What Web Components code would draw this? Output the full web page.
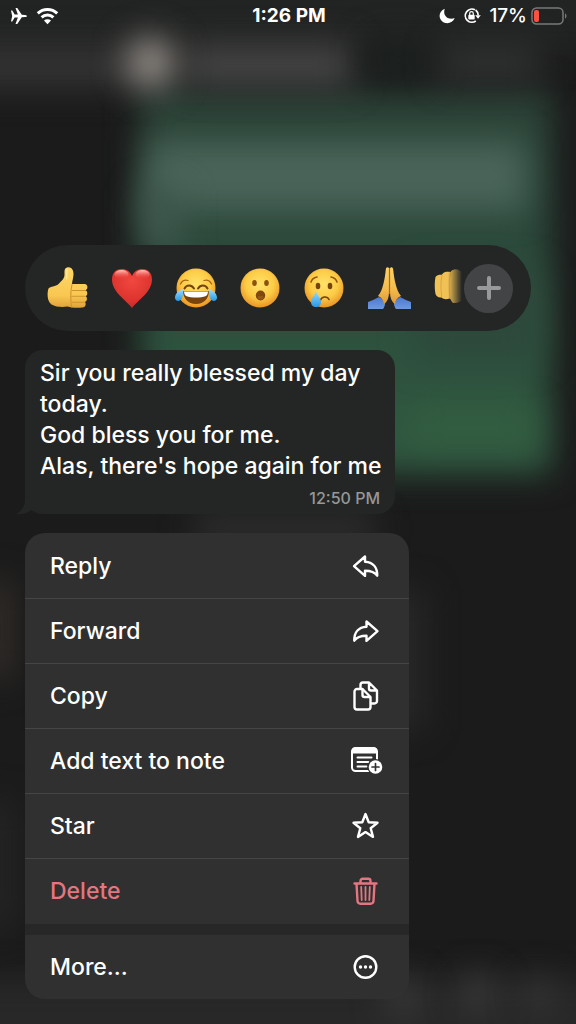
<!DOCTYPE html>
<html lang="en">
<head>
    <meta charset="utf-8">
    <meta name="viewport" content="width=device-width, initial-scale=1">
    <title>Message actions</title>
    <style>
        body {
            margin: 0;
            background: #1a1a1a;
            color: #ffffff;
            font-family: Inter, "Liberation Sans", sans-serif;
            font-weight: 500;
        }
    </style>
</head>
<body>
    <message-screen>
        <chat-backdrop slot="backdrop"></chat-backdrop>
        <status-bar slot="status" time="1:26 PM" battery="17%"></status-bar>
        <reaction-bar></reaction-bar>
        <message-bubble time="12:50 PM">Sir you really blessed my day today.<br>God bless you for me.<br>Alas, there's hope again for me</message-bubble>
        <action-menu>
            <action-item icon="reply">Reply</action-item>
            <action-item icon="forward">Forward</action-item>
            <action-item icon="copy">Copy</action-item>
            <action-item icon="note">Add text to note</action-item>
            <action-item icon="star">Star</action-item>
            <action-item icon="trash" danger>Delete</action-item>
            <action-item icon="more" separate>More...</action-item>
        </action-menu>
    </message-screen>

    <script>
        class BaseElement extends HTMLElement {
            render(html) {
                const template = document.createElement("template");
                template.innerHTML = html;
                const shadow = this.attachShadow({ mode: "open" });
                shadow.appendChild(template.content.cloneNode(true));
                return shadow;
            }
        }

        class MessageScreen extends BaseElement {
            constructor() {
                super();
                this.render(`
                    <style>
                        :host {
                            display: flex;
                            flex-direction: column;
                            position: relative;
                            min-height: 100vh;
                            overflow: hidden;
                        }

                        main {
                            display: flex;
                            flex-direction: column;
                            align-items: flex-start;
                            gap: 19px;
                            position: relative;
                            padding: 213px 45px 25px 25px;
                        }
                    </style>
                    <slot name="backdrop"></slot>
                    <slot name="status"></slot>
                    <main><slot></slot></main>
                `);
            }
        }

        // The blurred chat that lies behind the open menu
        class ChatBackdrop extends BaseElement {
            constructor() {
                super();
                this.render(`
                    <style>
                        :host {
                            display: block;
                            position: absolute;
                            inset: 0;
                            overflow: hidden;
                        }

                        svg {
                            display: block;
                            width: 100%;
                            height: 100%;
                        }
                    </style>
                    <svg viewBox="0 0 576 1024" preserveAspectRatio="none" aria-hidden="true">
                        <defs>
                            <linearGradient id="green" x1="0" y1="0" x2="0" y2="1">
                                <stop offset="0" stop-color="#2c4237"/>
                                <stop offset="0.4" stop-color="#2c4a3c"/>
                                <stop offset="0.62" stop-color="#2e513e"/>
                                <stop offset="1" stop-color="#305841"/>
                            </linearGradient>
                            <filter id="soft" x="-100%" y="-100%" width="300%" height="300%" color-interpolation-filters="sRGB">
                                <feGaussianBlur stdDeviation="16"/>
                            </filter>
                        </defs>
                        <rect width="576" height="1024" fill="#1b1b1b"/>
                        <rect x="-40" y="-40" width="660" height="92" fill="#222423" filter="url(#soft)"/>
                        <rect x="-40" y="44" width="180" height="44" fill="#333333" filter="url(#soft)"/>
                        <rect x="140" y="90" width="412" height="384" fill="url(#green)" filter="url(#soft)"/>
                        <rect x="146" y="142" width="380" height="68" fill="#4a6459" filter="url(#soft)"/>
                        <rect x="140" y="190" width="40" height="60" fill="#40584e" filter="url(#soft)"/>
                        <rect x="415" y="270" width="125" height="90" fill="#2d493c" filter="url(#soft)"/>
                        <rect x="410" y="410" width="126" height="34" fill="#335f40" filter="url(#soft)"/>
                        <rect x="185" y="44" width="168" height="42" fill="#454545" filter="url(#soft)"/>
                        <rect x="368" y="40" width="62" height="40" fill="#1c211f" filter="url(#soft)"/>
                        <rect x="440" y="44" width="100" height="36" fill="#303131" filter="url(#soft)"/>
                        <ellipse cx="151" cy="63" rx="26" ry="27" fill="#8e8984" filter="url(#soft)"/>
                        <rect x="195" y="516" width="180" height="24" fill="#333333" filter="url(#soft)"/>
                        <rect x="-20" y="580" width="34" height="100" fill="#312c29" filter="url(#soft)"/>
                        <rect x="60" y="590" width="364" height="140" fill="#282828" filter="url(#soft)"/>
                        <rect x="-20" y="800" width="34" height="130" fill="#252525" filter="url(#soft)"/>
                        <rect x="-40" y="978" width="660" height="100" fill="#282828" filter="url(#soft)"/>
                        <circle cx="404" cy="998" r="20" fill="#383838" filter="url(#soft)"/>
                        <circle cx="478" cy="994" r="20" fill="#383838" filter="url(#soft)"/>
                        <circle cx="538" cy="996" r="18" fill="#343434" filter="url(#soft)"/>
                    </svg>
                `);
            }
        }

        class StatusBar extends BaseElement {
            constructor() {
                super();
                const shadow = this.render(`
                    <style>
                        :host {
                            display: grid;
                            grid-template-columns: 1fr auto 1fr;
                            align-items: center;
                            position: relative;
                            height: 32px;
                            padding: 0 8px 0 10px;
                            font-size: 19px;
                            line-height: 24px;
                        }

                        .side {
                            display: flex;
                            align-items: center;
                            gap: 8px;
                        }

                        .right {
                            justify-content: flex-end;
                        }

                        .power {
                            display: flex;
                            align-items: center;
                            gap: 4px;
                        }

                        .time {
                            font-weight: 700;
                        }

                        svg {
                            display: block;
                            fill: #ffffff;
                        }
                    </style>
                    <div class="side">
                        <svg width="18" height="18" viewBox="0 0 16 18" aria-hidden="true">
                            <path d="M0 3.500h1.300L3.700 7.400l3.200.2L4.500 1h1.800l4.500 6.700 3.200.2C15.400 8 16 8.500 16 9s-.6 1-2 1.100l-3.200.2L6.300 17H4.500l2.400-6.600-3.200.2-2.400 3.900H0L1.200 9z"/>
                        </svg>
                        <svg width="23" height="18" viewBox="0 0 22 18" aria-hidden="true">
                            <g fill="none" stroke="#ffffff" stroke-width="3">
                                <path d="M1.300 6.300a14 14 0 0 1 19.400 0"/>
                                <path d="M5.100 10.300a8.600 8.600 0 0 1 11.800 0"/>
                            </g>
                            <path d="M7.500 13.600a5.100 5.100 0 0 1 7 0L11 17.200z"/>
                        </svg>
                    </div>
                    <span class="time"></span>
                    <div class="side right">
                        <svg width="16" height="18" viewBox="0 0 16 18" aria-hidden="true">
                            <path d="M5.800 1.800C.2 3.800-1 10.300 2.800 14c4 3.900 10.900 2.500 12.900-2.900-7 2.200-12.300-2.800-9.900-9.300z"/>
                        </svg>
                        <svg width="18" height="18" viewBox="0 0 18 18" aria-hidden="true">
                            <path d="M12 2.800A6.600 6.600 0 1 0 12.800 14M12.600 3a6.700 6.700 0 0 1 2.600 5.300" fill="none" stroke="#ffffff" stroke-width="1.700"/>
                            <path d="M12.200 8.200h5.600L15 11.800z"/>
                            <rect x="5.300" y="7.800" width="6.400" height="4.800" rx="1"/>
                            <path d="M6.700 8V6.500a1.800 1.800 0 0 1 3.600 0V8" fill="none" stroke="#ffffff" stroke-width="1.200"/>
                        </svg>
                        <div class="power">
                            <span class="battery"></span>
                            <svg width="37" height="18" viewBox="0 0 37 18" aria-hidden="true">
                                <rect x="1" y="1" width="31" height="16" rx="4.500" fill="none" stroke="#777978" stroke-width="1.500"/>
                                <rect x="3" y="3" width="5" height="12" rx="2" fill="#fb5141"/>
                                <path d="M34 6.500c2 .6 2 4.400 0 5z" fill="#777978"/>
                            </svg>
                        </div>
                    </div>
                `);
                this.timeElement = shadow.querySelector(".time");
                this.batteryElement = shadow.querySelector(".battery");
            }

            connectedCallback() {
                this.timeElement.textContent = this.getAttribute("time");
                this.batteryElement.textContent = this.getAttribute("battery");
            }
        }

        const faceDefs = `
            <defs>
                <radialGradient id="face" cx="0.5" cy="0.4" r="0.6">
                    <stop offset="0" stop-color="#ffe36a"/>
                    <stop offset="0.6" stop-color="#fccb45"/>
                    <stop offset="1" stop-color="#e99325"/>
                </radialGradient>
                <linearGradient id="tear" x1="0" y1="0" x2="0" y2="1">
                    <stop offset="0" stop-color="#9bdcff"/>
                    <stop offset="1" stop-color="#2699e6"/>
                </linearGradient>
            </defs>
            <circle cx="21" cy="21" r="19.500" fill="url(#face)"/>
        `;

        const reactions = [
            ["Thumbs up", `
                <defs>
                    <linearGradient id="thumb" x1="0" y1="0" x2="0" y2="1">
                        <stop offset="0" stop-color="#ffd968"/>
                        <stop offset="0.7" stop-color="#f8c751"/>
                        <stop offset="1" stop-color="#e0a038"/>
                    </linearGradient>
                </defs>
                <path d="M1.500 21.500c2-2.500 7-1.500 10-4.500 3.500-3.500 6-5.500 6-9.500 0-3-.5-6 2.500-7 4-1 6.500 2 6.500 6.500 0 4-1.500 7-1.500 10h12.500c3.500 0 4 5 1 6.200 2.500 1 2.300 5 .2 6 2 1.200 1.500 5-.7 5.800 1.500 2 .5 5.500-2.500 5.500-5 .5-11 .5-15-1-5 1-12 .5-16-2-4.500-3-4.500-12-3-16z" fill="url(#thumb)"/>
                <path d="M25 17.500c-1.500 7-1.500 15-.5 22.500M25.500 23.500h13M25 29.300h13.500M25.500 35.200h12" fill="none" stroke="#d09231" stroke-width="1.100" stroke-linecap="round"/>
                <path d="M20 2.500c-1 3 .5 6-.5 9" fill="none" stroke="#ffe893" stroke-width="1.500" stroke-linecap="round"/>
            `],
            ["Love", `
                <defs>
                    <radialGradient id="heart" cx="0.5" cy="0.3" r="0.75">
                        <stop offset="0" stop-color="#f0473f"/>
                        <stop offset="0.7" stop-color="#dd332e"/>
                        <stop offset="1" stop-color="#c2272d"/>
                    </radialGradient>
                    <linearGradient id="shine" x1="0" y1="0" x2="0" y2="1">
                        <stop offset="0" stop-color="#ffc9c2"/>
                        <stop offset="1" stop-color="#f0473f" stop-opacity="0"/>
                    </linearGradient>
                </defs>
                <path d="M21 41C15 33 1 25 1 12.500 1 6 5 2 10.500 2 15.500 2 19 4.500 21 9c2-4.500 5.500-7 10.500-7C37 2 41 6 41 12.500 41 25 27 33 21 41z" fill="url(#heart)"/>
                <ellipse cx="10.500" cy="7.500" rx="7" ry="4.500" fill="url(#shine)"/>
                <ellipse cx="31.500" cy="7.500" rx="7" ry="4.500" fill="url(#shine)"/>
            `],
            ["Laugh", `
                ${faceDefs}
                <path d="M5.500 17c1.500-3 4-4.500 7.500-3.500M36.500 17c-1.500-3-4-4.500-7.500-3.500" fill="none" stroke="#a76516" stroke-width="1.300" stroke-linecap="round"/>
                <path d="M9.500 21.500c2-4 7-4 9.500 0M23 21.500c2.500-4 7.500-4 9.500 0" fill="none" stroke="#76420c" stroke-width="2" stroke-linecap="round"/>
                <path d="M8 24h26c0 7-5 13-13 13S8 31 8 24z" fill="#79430d"/>
                <path d="M9 24.500h24c0 2-1 4-2 4.500-6 2-14 2-20 0-1-.5-2-2.500-2-4.500z" fill="#ffffff"/>
                <path d="M8.500 22.500C5 23 0 26 0 30.500c0 4 4.500 4.500 6.500 1.500 1.500-3 1.500-6 2-9.500zM33.500 22.500C37 23 42 26 42 30.500c0 4-4.500 4.500-6.500 1.500-1.500-3-1.500-6-2-9.500z" fill="url(#tear)"/>
            `],
            ["Surprised", `
                ${faceDefs}
                <ellipse cx="15.500" cy="16" rx="2.300" ry="3" fill="#8a520d"/>
                <ellipse cx="27.500" cy="16" rx="2.300" ry="3" fill="#8a520d"/>
                <ellipse cx="21.500" cy="28.500" rx="4.700" ry="5" fill="#80480d"/>
                <ellipse cx="21.500" cy="30.500" rx="3" ry="1.800" fill="#93581a"/>
            `],
            ["Sad", `
                ${faceDefs}
                <path d="M8 15c1-3 3-4.500 6-5M34 15c-1-3-3-4.500-6-5" fill="none" stroke="#93560f" stroke-width="1.600" stroke-linecap="round"/>
                <ellipse cx="15" cy="19" rx="2.300" ry="3.300" fill="#75430c"/>
                <ellipse cx="27" cy="19" rx="2.300" ry="3.300" fill="#75430c"/>
                <path d="M17.500 33c1.500-4 7-4 8.500-.5" fill="none" stroke="#75430c" stroke-width="1.600" stroke-linecap="round"/>
                <path d="M13 24c-1 4-5 7-5 11 0 3 2 5 5 5s5-2 5-5c0-4-4-7-5-11z" fill="url(#tear)"/>
            `],
            ["Thanks", `
                <defs>
                    <linearGradient id="hand" x1="0" y1="0" x2="0" y2="1">
                        <stop offset="0" stop-color="#ffd466"/>
                        <stop offset="0.6" stop-color="#f3ba4c"/>
                        <stop offset="1" stop-color="#dc9838"/>
                    </linearGradient>
                    <linearGradient id="cuff" x1="0" y1="0" x2="0" y2="1">
                        <stop offset="0" stop-color="#4b79cf"/>
                        <stop offset="1" stop-color="#7098e0"/>
                    </linearGradient>
                </defs>
                <path d="M1 42v-7c3-1 7-3 11-5 4 2 6 6 6 8-1 2-1 3-2 4zM44 42v-7c-3-1-7-3-11-5-4 2-6 6-6 8 1 2 1 3 2 4z" fill="url(#cuff)"/>
                <path d="M22 1c-1.500-1.500-3-.5-3.200 1.500-.6 6-1.300 10-2.300 14-1.200 5-2.500 9-5.500 12.500 4 2 5.500 4.500 6 8.500 3.500-3 5-7 5-12z" fill="url(#hand)"/>
                <path d="M23 1c1.500-1.500 3-.5 3.200 1.500.6 6 1.300 10 2.300 14 1.200 5 2.500 9 5.500 12.500-4 2-5.500 4.500-6 8.500-3.500-3-5-7-5-12z" fill="url(#hand)"/>
                <path d="M22.500 1v26" stroke="#a9681b" stroke-width="1.200"/>
            `],
            ["Fist bump", `
                <path d="M4.500 10c1.500-2.500 4.500-2 6.500-2.500C13.500 4 17 5 19.500 5c2-3 6-3.500 9-1.500 6 3 8 10 8 16 0 10-5 17-14 16.500-2 0-2-4-4-4.500-3 1-6 1-8-1-3 .5-5-1-6-3.500-1-5-1-12 0-17z" fill="#f0c154"/>
                <path d="M11 8c-1.500 7-1.200 14-.3 22M19.500 5.500c-2 8-1.500 17-.5 26" fill="none" stroke="#d9a544" stroke-width="1"/>
            `]
        ];

        class ReactionBar extends BaseElement {
            constructor() {
                super();
                const buttons = reactions.map(([label, shapes]) => `
                    <button type="button" aria-label="${label}">
                        <svg width="42" height="42" viewBox="0 0 42 42" aria-hidden="true">${shapes.replace(/id="(\w+)"|url\(#(\w+)\)/g, (match, id, ref) => {
                            // Gradient ids are shared inside one shadow root, so give each reaction its own
                            const key = label.replace(" ", "");
                            return id ? `id="${id}${key}"` : `url(#${ref}${key})`;
                        })}</svg>
                    </button>
                `).join("");

                this.render(`
                    <style>
                        :host {
                            display: flex;
                            align-items: center;
                            align-self: stretch;
                            box-sizing: border-box;
                            height: 86px;
                            padding: 0 18px 0 22px;
                            border-radius: 43px;
                            background: #242626;
                        }

                        .strip {
                            display: flex;
                            flex: 1;
                            gap: 22px;
                            min-width: 0;
                            padding: 4px 0;
                            overflow: hidden;
                            -webkit-mask-image: linear-gradient(to left, transparent 2px, black 16px);
                            mask-image: linear-gradient(to left, transparent 2px, black 16px);
                        }

                        button {
                            flex: none;
                            padding: 0;
                            border: 0;
                            background: none;
                            cursor: pointer;
                        }

                        svg {
                            display: block;
                            overflow: visible;
                        }

                        .add {
                            display: flex;
                            align-items: center;
                            justify-content: center;
                            width: 49px;
                            height: 49px;
                            border-radius: 50%;
                            background: #434446;
                        }
                    </style>
                    <div class="strip">${buttons}</div>
                    <button class="add" type="button" aria-label="Add reaction">
                        <svg width="24" height="24" viewBox="0 0 24 24" aria-hidden="true">
                            <path d="M12 2v20M2 12h20" stroke="#98999b" stroke-width="4" stroke-linecap="round"/>
                        </svg>
                    </button>
                `);
            }
        }

        class MessageBubble extends BaseElement {
            constructor() {
                super();
                const shadow = this.render(`
                    <style>
                        :host {
                            display: flex;
                            flex-direction: column;
                            gap: 6px;
                            position: relative;
                            box-sizing: border-box;
                            max-width: 370px;
                            padding: 8px 8px 6px 15px;
                            border-radius: 18px;
                            background: #242626;
                        }

                        p {
                            margin: 0;
                            font-size: 23px;
                            line-height: 31px;
                        }

                        time {
                            align-self: flex-end;
                            padding-right: 7px;
                            color: #969797;
                            font-size: 16px;
                            line-height: 20px;
                        }

                        .tail {
                            position: absolute;
                            left: -9px;
                            bottom: -1px;
                        }
                    </style>
                    <svg class="tail" width="24" height="24" viewBox="0 0 24 24" aria-hidden="true">
                        <path d="M9 0v9c0 6-3 11-9 14 6 1 12-1 15-4l9 4V0z" fill="#242626"/>
                    </svg>
                    <p><slot></slot></p>
                    <time></time>
                `);
                this.timeElement = shadow.querySelector("time");
            }

            connectedCallback() {
                this.timeElement.textContent = this.getAttribute("time");
            }
        }

        class ActionMenu extends BaseElement {
            constructor() {
                super();
                this.render(`
                    <style>
                        :host {
                            display: flex;
                            flex-direction: column;
                            width: 384px;
                            max-width: 100%;
                            padding-top: 1px;
                            border-radius: 20px;
                            overflow: hidden;
                            background: rgba(49, 49, 49, 0.96);
                        }
                    </style>
                    <slot></slot>
                `);
            }

            connectedCallback() {
                this.setAttribute("role", "menu");
            }
        }

        const icons = {
            reply: `
                <path d="M15 6.500v5.200c8 .5 12.500 5.500 12.200 14-2.700-4-6.200-5-12.200-5v5.200L4 16.200z"/>
            `,
            forward: `
                <path d="M16.500 6.500v5.200C8.500 12.200 4 17.200 4.300 25.700c2.700-4 6.200-5 12.200-5v5.200l11-9.700z"/>
            `,
            copy: `
                <path d="M7 9h5.500l8 8v10a2.500 2.500 0 0 1-2.500 2.500H7A2.500 2.500 0 0 1 4.500 27V11.500A2.500 2.500 0 0 1 7 9z"/>
                <path d="M12.500 9.500V15a2 2 0 0 0 2 2H20"/>
                <path d="M10.500 8.500V5A2.500 2.500 0 0 1 13 2.500h6l8 8V21a2.500 2.500 0 0 1-2.500 2.500h-3.500M19 3v5.500a2 2 0 0 0 2 2h5.500"/>
            `,
            note: `
                <path d="M18.500 26H5.500A3.500 3.500 0 0 1 2 22.500v-16A3.500 3.500 0 0 1 5.500 3h18A3.500 3.500 0 0 1 27 6.500v9" stroke-width="2"/>
                <path d="M2 8.500V6a3.500 3.500 0 0 1 3.500-3.500h18A3.500 3.500 0 0 1 27 6v2.500z" fill="currentColor" stroke="none"/>
                <path d="M7.500 12.500h14M7.500 17h11M7.500 21.500h9" stroke-width="2"/>
                <circle cx="25.500" cy="22" r="8" fill="#313131" stroke="none"/>
                <circle cx="25.500" cy="22" r="6.800" fill="currentColor" stroke="none"/>
                <path d="M25.500 18.500v7M22 22h7" stroke="#313131" stroke-width="1.700"/>
            `,
            star: `
                <path d="M15.500 4l3.200 8.300 8.800.5-6.800 5.500 2.300 8.600-7.500-4.800L8 26.900l2.300-8.600-6.800-5.500 8.800-.5z"/>
            `,
            trash: `
                <path d="M4.500 7.500h22M10.500 7V5A2.200 2.200 0 0 1 12.700 2.800h5.600A2.200 2.200 0 0 1 20.500 5v2M6.500 7.500l1 17.500a3 3 0 0 0 3 2.700h10a3 3 0 0 0 3-2.700l1-17.500"/>
                <path d="M11.200 11l.5 13M15.500 11v13M19.800 11l-.5 13" stroke-width="1.800"/>
            `,
            more: `
                <circle cx="15.500" cy="16" r="10.800"/>
                <g fill="currentColor" stroke="none">
                    <circle cx="10.500" cy="16" r="1.700"/>
                    <circle cx="15.500" cy="16" r="1.700"/>
                    <circle cx="20.500" cy="16" r="1.700"/>
                </g>
            `
        };

        class ActionItem extends BaseElement {
            constructor() {
                super();
                const shadow = this.render(`
                    <style>
                        :host {
                            display: block;
                            border-bottom: 1px solid #454545;
                        }

                        :host([danger]) {
                            color: #e47680;
                            border-bottom: 0;
                        }

                        :host([separate]) {
                            border-top: 11px solid #272727;
                            border-bottom: 0;
                        }

                        button {
                            display: flex;
                            align-items: center;
                            justify-content: space-between;
                            width: 100%;
                            height: 64px;
                            padding: 0 27px 0 25px;
                            border: 0;
                            background: none;
                            color: inherit;
                            font: inherit;
                            font-size: 23px;
                            line-height: 31px;
                            text-align: left;
                            cursor: pointer;
                        }

                        :host([danger]) button {
                            height: 65px;
                        }

                        svg {
                            flex: none;
                            fill: none;
                            stroke: currentColor;
                            stroke-width: 2.4px;
                            stroke-linecap: round;
                            stroke-linejoin: round;
                            overflow: visible;
                        }
                    </style>
                    <button type="button" role="menuitem">
                        <slot></slot>
                        <svg width="32" height="32" viewBox="0 0 32 32" aria-hidden="true"></svg>
                    </button>
                `);
                this.svg = shadow.querySelector("svg");
            }

            connectedCallback() {
                this.svg.innerHTML = icons[this.getAttribute("icon")] || "";
            }
        }

        customElements.define("message-screen", MessageScreen);
        customElements.define("chat-backdrop", ChatBackdrop);
        customElements.define("status-bar", StatusBar);
        customElements.define("reaction-bar", ReactionBar);
        customElements.define("message-bubble", MessageBubble);
        customElements.define("action-menu", ActionMenu);
        customElements.define("action-item", ActionItem);
    </script>
</body>
</html>
